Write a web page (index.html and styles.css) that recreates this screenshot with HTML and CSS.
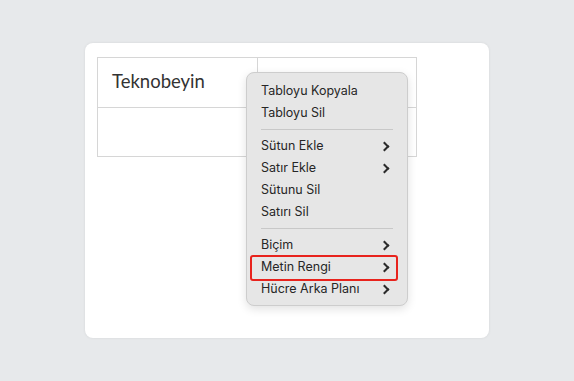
FILE: index.html
```html
<!DOCTYPE html>
<html lang="tr">
<head>
    <meta charset="UTF-8">
    <meta name="viewport" content="width=device-width, initial-scale=1.0">
    <title>Tablo Menüsü</title>
    <link rel="stylesheet" href="styles.css">
</head>
<body>
    <div class="card">
        <table class="doc-table">
            <tr>
                <td>Teknobeyin</td>
                <td></td>
            </tr>
            <tr>
                <td></td>
                <td></td>
            </tr>
        </table>

        <div class="context-menu">
            <div class="menu-item">Tabloyu Kopyala</div>
            <div class="menu-item">Tabloyu Sil</div>
            <div class="menu-sep"></div>
            <div class="menu-item has-sub">Sütun Ekle</div>
            <div class="menu-item has-sub">Satır Ekle</div>
            <div class="menu-item">Sütunu Sil</div>
            <div class="menu-item">Satırı Sil</div>
            <div class="menu-sep"></div>
            <div class="menu-item has-sub">Biçim</div>
            <div class="menu-item has-sub marked">Metin Rengi</div>
            <div class="menu-item has-sub">Hücre Arka Planı</div>
        </div>
    </div>
</body>
</html>
```

FILE: styles.css
```css
body {
    margin: 0;
    padding: 43px 0 0 85px;
    height: 381px;
    box-sizing: border-box;
    background-color: #e7e9eb;
    font-family: 'Inter', 'Noto Sans', sans-serif;
}

.card {
    position: relative;
    width: 404px;
    height: 295px;
    box-sizing: border-box;
    padding: 14px 12px;
    background-color: #fff;
    border-radius: 8px;
    box-shadow: 0 0 3px rgba(0, 0, 0, 0.08);
}

.doc-table {
    border-collapse: collapse;
    width: 320px;
}

.doc-table td {
    width: 160px;
    height: 49px;
    box-sizing: border-box;
    padding: 0 14px;
    border: 1px solid #d6d6d6;
    font-family: 'Lato', sans-serif;
    font-size: 18.5px;
    color: #333;
    vertical-align: middle;
}

.doc-table tr:first-child td {
    height: 50px;
    padding-bottom: 3px;
}

/* floating context menu */
.context-menu {
    position: absolute;
    left: 161px;
    top: 29px;
    width: 162px;
    box-sizing: border-box;
    padding: 7px 0 5px;
    background-color: #e6e6e6;
    border: 1px solid #cdcdcd;
    border-radius: 8px;
    box-shadow: 0 3px 10px rgba(0, 0, 0, 0.12);
}

.menu-item {
    position: relative;
    height: 22px;
    line-height: 22px;
    padding-left: 14px;
    font-size: 12.5px;
    color: #262626;
}

.menu-item.has-sub::after {
    content: '';
    position: absolute;
    right: 19px;
    top: 8px;
    width: 5px;
    height: 5px;
    border-top: 2px solid #2b2b2b;
    border-right: 2px solid #2b2b2b;
    transform: rotate(45deg);
}

.menu-item.marked::before {
    content: '';
    position: absolute;
    left: 3px;
    right: 9px;
    top: -1px;
    bottom: -3px;
    border: 2px solid #e8231d;
    border-radius: 3px;
}

.menu-sep {
    height: 1px;
    margin: 5px 14px;
    background-color: #c8c8c8;
}
```
